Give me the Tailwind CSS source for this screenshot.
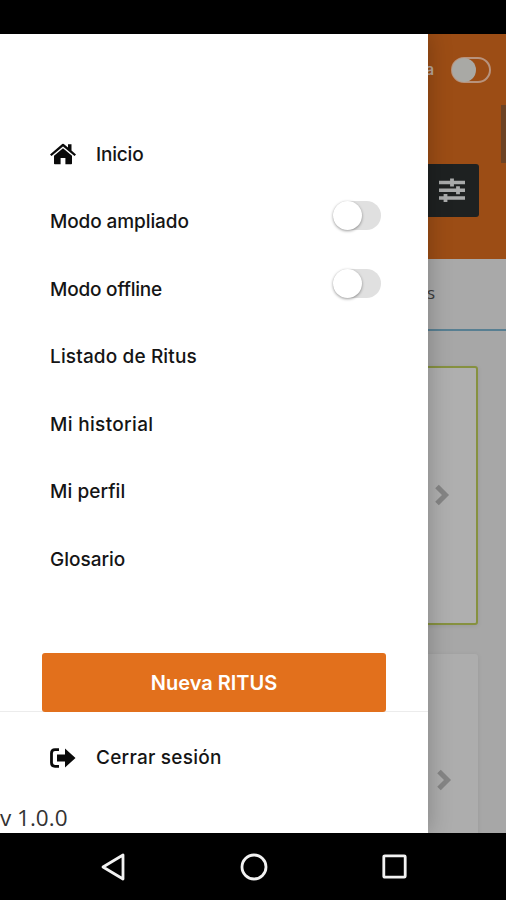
<!DOCTYPE html>
<html lang="es">
<head>
<meta charset="utf-8">
<title>Ritus</title>
<script src="https://cdn.jsdelivr.net/npm/@tailwindcss/browser@4"></script>
</head>
<body class="w-[506px] h-[900px] overflow-hidden bg-black font-['Inter',sans-serif]">
<div class="flex flex-col w-[506px] h-[900px]">
  <div class="h-[34px] shrink-0 bg-black"></div>
  <main class="relative h-[799px] shrink-0 overflow-hidden bg-[#a7a7a7]">
    <!-- page behind the drawer -->
    <div class="flex flex-col h-full">
      <header class="h-[225px] shrink-0 bg-[#9c4d15]">
        <div class="flex justify-end items-center h-[71px] pr-[15px] gap-[17px]">
          <span class="pt-[2px] text-[15px] font-semibold text-[#b9a79b]">Ayuda</span>
          <span class="flex w-[40px] h-[26px] rounded-full border-2 border-[#b8937d]"><span class="w-[24px] h-[24px] -mt-px -ml-px rounded-full bg-[#a9a9a5]"></span></span>
        </div>
        <div class="flex justify-end h-[59px]"><span class="w-[5px] h-[58px] bg-[#6d4325]"></span></div>
        <div class="flex justify-end pr-[27px]">
          <button class="flex items-center justify-center w-[54px] h-[53px] rounded-[3px] bg-[#1e2121]">
            <svg class="-mt-[2px]" width="28" height="26" viewBox="0 0 28 26" fill="none" stroke="#a9abab"><path d="M1 5.5H27M1 13.2H27M1 21H27" stroke-width="3.400"/><path d="M14 1.500V9.500M20 9.200V17.200M7.500 17V25" stroke-width="3.800"/></svg>
          </button>
        </div>
      </header>
      <div class="flex items-center justify-end h-[72px] shrink-0 pr-[71px] border-b-2 border-[#587f92] bg-[#a9a9a9] text-[17px] text-[#3c3c3c] font-['Open_Sans',sans-serif]"><span class="-mt-[2px]">Todos</span></div>
      <div class="flex flex-col gap-[29px] pt-[35px] pl-7 pr-[28px]">
        <div class="flex items-center justify-end h-[259px] pr-[26px] rounded-[3px] border-2 border-[#869140] bg-[#afafaf] shadow-[0_1px_5px_rgba(0,0,0,0.08)]">
          <svg class="-mt-px" width="16" height="22" viewBox="0 0 16 22" fill="none" stroke="#858585" stroke-width="5"><path d="M3 2.500L11.500 11L3 19.500"/></svg>
        </div>
        <div class="flex items-center justify-end h-[252px] pr-[26px] rounded-[3px] bg-[#adadad] shadow-[0_1px_5px_rgba(0,0,0,0.08)]">
          <svg width="16" height="22" viewBox="0 0 16 22" fill="none" stroke="#858585" stroke-width="5"><path d="M3 2.500L11.500 11L3 19.500"/></svg>
        </div>
      </div>
    </div>

    <!-- drawer -->
    <aside class="absolute left-0 top-0 w-[428px] h-[799px] flex flex-col bg-white shadow-[0_0_22px_rgba(0,0,0,0.25)] text-[#151515]">
      <nav class="flex flex-col pt-[86px] pl-[50px] pr-[47px] h-[619px] shrink-0 text-[19px] font-medium">
        <a class="flex items-center h-[67.5px]">
          <svg class="mr-[20px]" width="26" height="22" viewBox="0 0 26 22" fill="#0a0a0a"><path d="M0 11.500L12.200 1Q13 .4 13.800 1L18 4.600V1.200H21.500V7.600L26 11.500L24.500 13.100L13 3.500L1.500 13.100Z"/><path d="M4 12.700L13 5.200L22 12.700V20.500Q22 21.300 21.200 21.300H15.400V15H10.600V21.300H4.800Q4 21.300 4 20.500Z"/></svg>
          <span class="pt-[2px] tracking-[-0.2px]">Inicio</span>
        </a>
        <div class="flex items-center justify-between h-[67.5px]"><span class="pt-[2px] tracking-[-0.1px]">Modo ampliado</span>
          <span class="flex items-center w-[48px] h-[29px] mb-[11px] rounded-full bg-[#e0e0e0]"><span class="size-[29px] rounded-full bg-white shadow-[0_1px_3px_rgba(0,0,0,0.4)]"></span></span></div>
        <div class="flex items-center justify-between h-[67.5px]"><span class="pt-[2px] tracking-[-0.2px]">Modo offline</span>
          <span class="flex items-center w-[48px] h-[29px] mb-[11px] rounded-full bg-[#e0e0e0]"><span class="size-[29px] rounded-full bg-white shadow-[0_1px_3px_rgba(0,0,0,0.4)]"></span></span></div>
        <a class="flex items-center h-[67.5px]"><span class="pt-[2px] tracking-[0.14px]">Listado de Ritus</span></a>
        <a class="flex items-center h-[67.5px]"><span class="pt-[2px] tracking-[0.34px]">Mi historial</span></a>
        <a class="flex items-center h-[67.5px]"><span class="pt-[2px] tracking-[0.08px]">Mi perfil</span></a>
        <a class="flex items-center h-[67.5px]"><span class="pt-[2px]">Glosario</span></a>
      </nav>
      <div class="h-[59px] shrink-0 pl-[42px] border-b border-[#ececec]">
        <button class="w-[344px] h-[59px] rounded-[3px] bg-[#e2701c] text-white text-[20px] font-semibold">Nueva RITUS</button>
      </div>
      <a class="flex items-center h-[91px] shrink-0 pl-[50px] text-[19px] font-medium">
        <svg class="mr-[20px]" width="26" height="20" viewBox="0 0 26 20"><path d="M9 1.700H5Q1.500 1.700 1.500 5.200V14.800Q1.500 18.300 5 18.300H9" fill="none" stroke="#0a0a0a" stroke-width="2.800"/><path d="M7 6.500H15V.5L25.500 10L15 19.500V13.500H7Z" fill="#0a0a0a"/></svg>
        <span class="pt-[2px] tracking-[0.24px]">Cerrar sesión</span>
      </a>
      <div class="flex items-center h-[30px] text-[22.5px] text-[#333] font-['Open_Sans',sans-serif]">v 1.0.0</div>
    </aside>
  </main>
  <footer class="flex items-center justify-between h-[67px] shrink-0 bg-black pl-[101px] pr-[99px]">
    <svg width="26" height="28" viewBox="0 0 26 28" fill="none" stroke="#f2f2f2" stroke-width="2.800" stroke-linejoin="round"><path d="M22 2V26L2 14Z"/></svg>
    <svg class="-ml-[2px]" width="28" height="28" viewBox="0 0 28 28" fill="none" stroke="#f2f2f2" stroke-width="2.800"><circle cx="14" cy="14" r="12"/></svg>
    <svg width="25" height="25" viewBox="0 0 25 25" fill="none" stroke="#f2f2f2" stroke-width="2.800"><rect x="1.800" y="1.800" width="21.400" height="21.400" rx="1"/></svg>
  </footer>
</div>
</body>
</html>
